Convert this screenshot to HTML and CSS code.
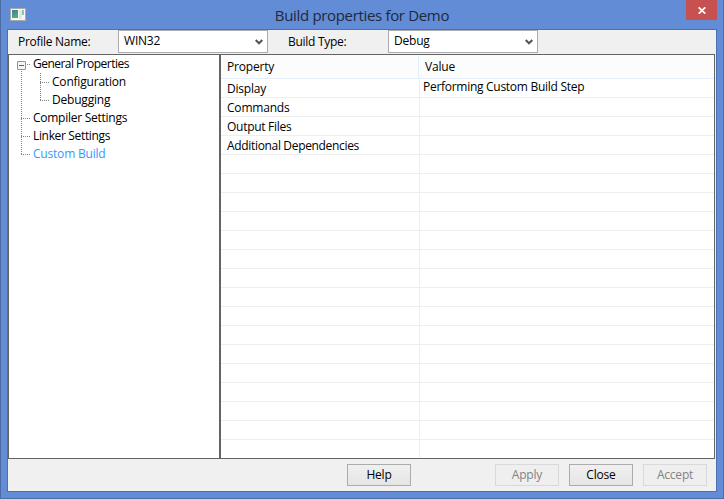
FILE: index.html
```html
<!DOCTYPE html>
<html lang="en">
<head>
<meta charset="utf-8">
<title>Build properties for Demo</title>
<link rel="stylesheet" href="styles.css">
</head>
<body>
<div class="window">
  <header class="titlebar">
    <svg class="app-icon" width="16" height="13" viewBox="0 0 16 13">
      <defs><linearGradient id="pane" x1="0" y1="0" x2="0.4" y2="1"><stop offset="0" stop-color="#4775a6"/><stop offset="1" stop-color="#43b47c"/></linearGradient></defs>
      <rect x=".5" y=".5" width="15" height="12" fill="#f7f7f4" stroke="#a9a9a5"/>
      <rect x="2" y="2" width="6" height="8" fill="url(#pane)"/>
      <rect x="9" y="2" width="3" height="9" fill="#e3e6e6"/>
      <rect x="12" y="2" width="2" height="5" fill="#8cc5b0"/>
    </svg>
    <h1 class="title">Build properties for Demo</h1>
    <div class="close"><svg width="8" height="7" viewBox="0 0 8 7"><path d="M.7 .3 7.3 6.7M7.3 .3 .7 6.7" stroke="#fff" stroke-width="1.7"/></svg></div>
  </header>
  <main class="client">
    <div class="toolbar">
      <label class="profile-label">Profile Name:</label>
      <div class="combo profile"><span>WIN32</span><svg width="8" height="6" viewBox="0 0 8 6"><path d="M.7 1 4 4.3 7.3 1" fill="none" stroke="#555" stroke-width="2"/></svg></div>
      <label class="type-label">Build Type:</label>
      <div class="combo"><span>Debug</span><svg width="8" height="6" viewBox="0 0 8 6"><path d="M.7 1 4 4.3 7.3 1" fill="none" stroke="#555" stroke-width="2"/></svg></div>
    </div>
    <div class="panes">
      <nav class="tree">
        <svg class="branches" width="24" height="108" viewBox="0 0 24 108">
          <path d="M4.5 16V100M4 63.5H14M4 81.5H14M4 99.5H14M10 9.5H14" />
        </svg>
        <svg class="subbranches" width="10" height="30" viewBox="0 0 10 30"><path d="M.5 0V28M0 9.5H9M0 27.5H9"/></svg>
        <svg class="expander" width="9" height="9" viewBox="0 0 9 9"><rect x=".5" y=".5" width="8" height="8" rx=".5" fill="#f5f5f5" stroke="#919191"/><path d="M2 4.5H7" stroke="#4460a8"/></svg>
        <div class="node"><span class="w-general">General Properties</span></div>
        <div class="node child"><span>Configuration</span></div>
        <div class="node child"><span>Debugging</span></div>
        <div class="node"><span class="w-compiler">Compiler Settings</span></div>
        <div class="node"><span class="w-linker">Linker Settings</span></div>
        <div class="node selected"><span>Custom Build</span></div>
      </nav>
      <section class="grid">
        <div class="head"><div class="name">Property</div><div class="value">Value</div></div>
        <div class="row"><div class="name">Display</div><div class="value"><span class="w-step">Performing Custom Build Step</span></div></div>
        <div class="row"><div class="name">Commands</div><div class="value"></div></div>
        <div class="row"><div class="name"><span class="w-step">Output Files</span></div><div class="value"></div></div>
        <div class="row"><div class="name"><span class="w-deps">Additional Dependencies</span></div><div class="value"></div></div>
        <div class="row"><div class="name"></div><div class="value"></div></div>
        <div class="row"><div class="name"></div><div class="value"></div></div>
        <div class="row"><div class="name"></div><div class="value"></div></div>
        <div class="row"><div class="name"></div><div class="value"></div></div>
        <div class="row"><div class="name"></div><div class="value"></div></div>
        <div class="row"><div class="name"></div><div class="value"></div></div>
        <div class="row"><div class="name"></div><div class="value"></div></div>
        <div class="row"><div class="name"></div><div class="value"></div></div>
        <div class="row"><div class="name"></div><div class="value"></div></div>
        <div class="row"><div class="name"></div><div class="value"></div></div>
        <div class="row"><div class="name"></div><div class="value"></div></div>
        <div class="row"><div class="name"></div><div class="value"></div></div>
        <div class="row"><div class="name"></div><div class="value"></div></div>
        <div class="row"><div class="name"></div><div class="value"></div></div>
        <div class="row"><div class="name"></div><div class="value"></div></div>
        <div class="row last"><div class="name"></div><div class="value"></div></div>
      </section>
    </div>
    <footer class="actions">
      <button class="help">Help</button>
      <button disabled>Apply</button>
      <button>Close</button>
      <button disabled>Accept</button>
    </footer>
  </main>
</div>
</body>
</html>
```

FILE: styles.css
```css
* { box-sizing: border-box; }
body { margin: 0; font: 12px/18px "Open Sans", "Noto Sans", sans-serif; color: #000; letter-spacing: -0.2px; }
svg { display: block; }
.window { width: 724px; height: 499px; overflow: hidden; background: #628cd5; border: 1px solid #4b6ba3; border-top: 0; padding: 0 6px 6px; }
.titlebar { height: 29px; display: flex; align-items: flex-start; padding-left: 3px; }
.app-icon { margin-top: 8px; }
.title { flex: 1; margin: 4px 0 0; font-size: 15px; line-height: 22px; font-weight: 400; color: #20293b; text-align: center; letter-spacing: -0.33px; padding-left: 12px; }
.close { width: 31px; height: 20px; background: #c75050; display: flex; align-items: center; justify-content: center; padding: 1px 0 0 1px; }
.client { width: 710px; height: 463px; border: 1px solid #4b70b0; background: #f0f0f0; }
.toolbar { height: 24px; display: flex; align-items: flex-start; padding-left: 10px; }
.toolbar label { line-height: 24px; width: 100px; letter-spacing: -0.28px; }
.combo { width: 150px; height: 23px; border: 1px solid #acacb0; background: #fff; display: flex; justify-content: space-between; align-items: center; padding: 0 4px 0 5px; }
.combo span { line-height: 19px; padding-bottom: 2px; }
.toolbar .type-label { margin-left: 20px; }
.panes { display: flex; width: 707px; height: 405px; border: 1px solid #646464; }
.tree { position: relative; width: 210px; background: #fff; }
.node { height: 18px; padding-left: 24px; white-space: nowrap; }
.node.child { padding-left: 43px; }
.selected { color: #3399ff; }
.w-general { letter-spacing: -0.53px; }
.w-compiler { letter-spacing: -0.26px; }
.w-linker { letter-spacing: -0.34px; }
.w-step { letter-spacing: -0.28px; }
.w-deps { letter-spacing: -0.33px; }
.branches, .subbranches, .expander { position: absolute; left: 8px; top: 0; }
.subbranches { left: 31px; top: 18px; }
.expander { top: 6px; }
.branches path, .subbranches path { fill: none; stroke: #808080; stroke-dasharray: 1 1; }
.grid { flex: 1; border-left: 2px solid #646464; background: #fff; overflow: hidden; }
.head, .row { display: grid; grid-template-columns: 199px 1fr; border-bottom: 1px solid #eee; height: 19px; white-space: nowrap; }
.head { grid-template-columns: 198px 1fr; height: 24px; background: #fcfcfc; border-color: #e5effb; line-height: 24px; }
.name { padding-left: 6px; border-right: 1px solid #eee; }
.row .name { line-height: 20px; height: 100%; }
.head .name { border-color: #e1eefb; }
.head .value { padding-left: 6px; }
.row .value { padding-left: 3px; line-height: 15px; }
.row.last { border: 0; }
.actions { display: flex; gap: 10px; height: 32px; padding: 5px 9px 0 0; justify-content: flex-end; }
.actions button { width: 64px; height: 22px; padding: 0; border: 1px solid #acacac; background: linear-gradient(#f0f0f0, #e5e5e5); font: inherit; letter-spacing: inherit; color: #000; }
.actions button:disabled { background: #efefef; border-color: #d9d9d9; color: #838383; }
.actions .help { margin-right: 74px; }
```
